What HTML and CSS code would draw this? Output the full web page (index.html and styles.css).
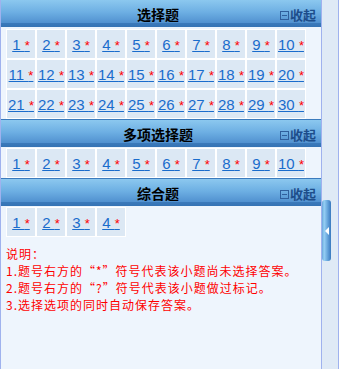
FILE: index.html
```html
<!DOCTYPE html>
<html lang="zh-CN">
<head>
  <meta charset="UTF-8">
  <title>答题卡</title>
  <link rel="stylesheet" href="styles.css">
</head>
<body>
  <div class="layout">
    <div class="panel">
      <!-- 选择题 -->
      <div class="section">
        <div class="section-head">
          <span class="section-title">选择题</span>
          <a class="collapse" href="#"><span class="collapse-icon"></span>收起</a>
        </div>
        <div class="section-body">
          <div class="grid" id="single"></div>
        </div>
      </div>
      <!-- 多项选择题 -->
      <div class="section">
        <div class="section-head">
          <span class="section-title">多项选择题</span>
          <a class="collapse" href="#"><span class="collapse-icon"></span>收起</a>
        </div>
        <div class="section-body">
          <div class="grid" id="multi"></div>
        </div>
      </div>
      <!-- 综合题 -->
      <div class="section">
        <div class="section-head">
          <span class="section-title">综合题</span>
          <a class="collapse" href="#"><span class="collapse-icon"></span>收起</a>
        </div>
        <div class="section-body">
          <div class="grid" id="general"></div>
        </div>
      </div>

      <div class="notes">
        <p>说明：</p>
        <p>1.题号右方的“*”符号代表该小题尚未选择答案。</p>
        <p>2.题号右方的“?”符号代表该小题做过标记。</p>
        <p>3.选择选项的同时自动保存答案。</p>
      </div>
    </div>
    <div class="side">
      <div class="side-tab"><span class="side-arrow"></span></div>
    </div>
  </div>

  <script>
    // build the question number cells
    function fillGrid(id, count) {
      var grid = document.getElementById(id);
      for (var i = 1; i <= count; i++) {
        var cell = document.createElement('div');
        cell.className = 'cell';
        cell.innerHTML = '<a href="#">' + i + ' <span class="mark">*</span></a>';
        grid.appendChild(cell);
      }
    }
    fillGrid('single', 30);
    fillGrid('multi', 10);
    fillGrid('general', 4);
  </script>
</body>
</html>
```

FILE: styles.css
```css
html, body {
  margin: 0;
  padding: 0;
}
body {
  font-family: "Liberation Sans", "Noto Sans CJK SC", sans-serif;
  background: #eef5fd;
}
.layout {
  display: flex;
  width: 339px;
  height: 369px;
}
.panel {
  width: 320px;
  border-left: 1px solid #9fb2ee;
  border-right: 1px solid #9fb2ee;
  background: #eef5fd;
}
.side {
  width: 16px;
  border-right: 1px solid #9fb2ee;
  background: #dfeaf6;
}
.side-tab {
  width: 9px;
  height: 61px;
  margin-top: 200px;
  border-radius: 3px;
  background: linear-gradient(to right, #6aa8dc, #95cff4 25%, #5c9bd6 70%, #3a7abf);
  display: flex;
  align-items: center;
  justify-content: center;
}
.side-arrow {
  width: 0;
  height: 0;
  border-top: 4px solid transparent;
  border-bottom: 4px solid transparent;
  border-right: 4px solid #fff;
}
/* section header */
.section + .section {
  border-top: 1px solid #3b7bbd;
}
.section-head {
  height: 27px;
  display: flex;
  align-items: center;
  position: relative;
  background: linear-gradient(#8cc8ef, #6dafe3 45%, #5090cf 86%, #3a79ba 87%, #3573b4);
}
.section-title {
  flex: 1;
  text-align: center;
  padding-right: 6px;
  font-family: "Noto Sans CJK SC", sans-serif;
  font-size: 14px;
  font-weight: bold;
  color: #000;
}
.collapse {
  position: absolute;
  right: 5px;
  top: 5px;
  display: flex;
  align-items: center;
  gap: 1px;
  font-family: "Noto Sans CJK SC", sans-serif;
  font-size: 13px;
  font-weight: bold;
  color: #1d4d8a;
  text-decoration: none;
}
.collapse-icon {
  width: 7px;
  height: 7px;
  border: 1px solid #2f5f9c;
  position: relative;
  margin-top: 1px;
}
.collapse-icon::after {
  content: "";
  position: absolute;
  left: 1px;
  right: 1px;
  top: 3px;
  height: 1px;
  background: #2f5f9c;
}
/* question cells */
.section-body {
  padding: 1px 5px 0;
}
.section:first-child .section-body {
  padding-top: 2px;
}
.grid {
  display: grid;
  grid-template-columns: repeat(10, 30px);
}
.cell {
  box-sizing: border-box;
  height: 30px;
  border: 1px solid #fff;
  background: #dce8f4;
  display: flex;
  align-items: center;
  justify-content: center;
  white-space: nowrap;
  font-size: 15px;
}
.cell a {
  color: #1a6ccc;
  text-decoration: underline;
}
.cell .mark {
  color: #ff0000;
  font-size: 13px;
}
/* notes */
.notes {
  padding: 8px 5px 0;
  color: #ff0000;
  font-family: "Noto Sans CJK SC", sans-serif;
  font-size: 12px;
  letter-spacing: 1px;
  line-height: 17px;
}
.notes p {
  margin: 0;
}
```
